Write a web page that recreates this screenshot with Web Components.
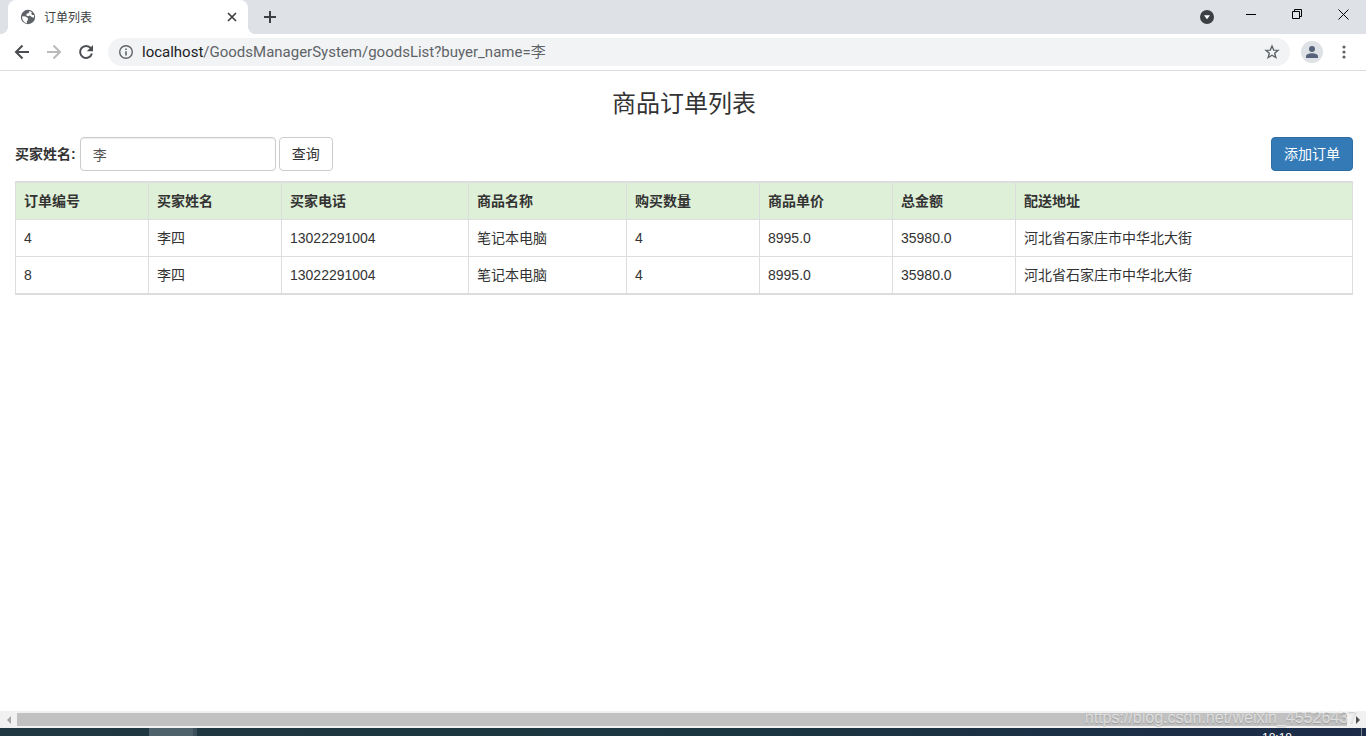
<!DOCTYPE html>
<html lang="zh-CN">
<head>
<meta charset="utf-8">
<title>订单列表</title>
<style>
html, body { height: 100%; }
body { margin: 0; color: #333; font: 14px/20px "Liberation Sans", "Noto Sans CJK SC", sans-serif; }
</style>
</head>
<body>
<browser-window>
  <tab-strip slot="chrome">订单列表</tab-strip>
  <address-bar slot="chrome" host="localhost" path="/GoodsManagerSystem/goodsList?buyer_name=李"></address-bar>
  <order-page>
    <span slot="title">商品订单列表</span>
    <order-search slot="search" value="李"></order-search>
    <order-table slot="table"></order-table>
  </order-page>
  <scroll-strip slot="footer">https://blog.csdn.net/weixin_45526437</scroll-strip>
  <task-bar slot="footer">18:18</task-bar>
</browser-window>

<script>
class BaseElement extends HTMLElement {
  connectedCallback() {
    if (this.shadowRoot) return;
    this.attachShadow({ mode: "open" }).innerHTML =
      `<style>:host, *, *::before { box-sizing: border-box; } button { font: inherit; color: inherit; cursor: pointer; } svg { display: block; }</style>` + this.render();
  }
}

customElements.define("browser-window", class extends BaseElement {
  render() {
    return `<style>
      :host { display: flex; flex-direction: column; height: 100vh; background: #fff; overflow: hidden; }
      main { flex: 1; min-height: 0; overflow: auto; }
    </style>
    <slot name="chrome"></slot><main><slot></slot></main><slot name="footer"></slot>`;
  }
});

customElements.define("tab-strip", class extends BaseElement {
  render() {
    return `<style>
      :host { display: flex; height: 34px; padding-left: 8px; background: #dee1e6; color: #3c4043; font: 12px/16px "Noto Sans CJK SC", sans-serif; }
      button { border: 0; padding: 0; background: none; display: grid; place-items: center; }
      .tab { position: relative; display: flex; align-items: center; gap: 8px; width: 240px; padding: 0 8px 0 12px; background: #fff; border-radius: 8px 8px 0 0; }
      .tab::before, .tab::after { content: ""; position: absolute; bottom: 0; width: 8px; height: 8px; }
      .tab::before { right: 100%; background: radial-gradient(circle at 0 0, transparent 8px, #fff 8px); }
      .tab::after { left: 100%; background: radial-gradient(circle at 100% 0, transparent 8px, #fff 8px); }
      .name { flex: 1; }
      .close { width: 16px; height: 16px; }
      .new { width: 28px; margin-left: 8px; }
      .menu { width: 42px; margin-left: auto; }
      .win { width: 46px; height: 28px; color: #000; }
    </style>
    <div class="tab">
      <svg width="16" height="16" viewBox="0 0 16 16"><circle cx="8" cy="8" r="7.2" fill="#5f6368"/><path d="M2.2 7.2 5.5 7.6 7.8 9 8 11 6.8 12.2 7 14.2A6.2 6.2 0 0 1 2.2 7.2ZM9.2 2.2 8.8 4 6.7 4.8 6.3 6.4 8 7.3 10 6.6 11.6 8.1 14 8.8A6.3 6.3 0 0 0 13.8 6L12 5.9 11.3 4.4 11.8 3.2A6 6 0 0 0 9.2 2.2Z" fill="#fff"/></svg>
      <span class="name"><slot></slot></span>
      <button class="close" aria-label="关闭标签页"><svg width="10" height="10" viewBox="0 0 10 10" stroke="#3c4043" stroke-width="1.7"><path d="M1 1 9 9M9 1 1 9"/></svg></button>
    </div>
    <button class="new" aria-label="新标签页"><svg width="12" height="12" viewBox="0 0 12 12" stroke="#3c4043" stroke-width="2"><path d="M6 0V12M0 6H12"/></svg></button>
    <button class="menu" aria-label="搜索标签页"><svg width="14" height="14" viewBox="0 0 14 14"><circle cx="7" cy="7" r="7" fill="#3c4043"/><path d="M4 5.2H10L7 9.2Z" fill="#fff"/></svg></button>
    <button class="win" aria-label="最小化"><svg width="10" height="10" stroke="#000"><path d="M0 5.5H10"/></svg></button>
    <button class="win" aria-label="还原"><svg width="10" height="10" fill="none" stroke="#000"><path d="M.5 2.5H7.5V9.5H.5ZM2.5 2.5V.5H9.5V7.5H7.5"/></svg></button>
    <button class="win" aria-label="关闭"><svg width="11" height="11" stroke="#000"><path d="M.5 .5 10.5 10.5M10.5 .5 .5 10.5"/></svg></button>`;
  }
});

customElements.define("address-bar", class extends BaseElement {
  render() {
    return `<style>
      :host { display: flex; align-items: center; gap: 4px; height: 37px; padding: 0 8px; border-bottom: 1px solid #dadce0; background: #fff; color: #5f6368; font: 15px/20px Roboto, "Noto Sans CJK SC", sans-serif; }
      button { border: 0; padding: 0; background: none; display: grid; place-items: center; width: 28px; height: 28px; }
      .box { flex: 1; display: flex; align-items: center; gap: 8px; height: 28px; padding: 0 4px 0 10px; margin-left: 4px; border-radius: 14px; background: #f1f3f4; }
      .url { flex: 1; white-space: nowrap; outline: 0; }
      .host { color: #202124; }
      .user { margin-left: 4px; }
    </style>
    <button aria-label="后退"><svg width="16" height="16" viewBox="0 0 16 16" fill="none" stroke="#4a4d51" stroke-width="2"><path d="M15 8H2.5M8.5 1.5 2 8l6.500 6.500"/></svg></button>
    <button aria-label="前进" disabled><svg width="16" height="16" viewBox="0 0 16 16" fill="none" stroke="#bababc" stroke-width="2"><path d="M1 8H13.500M7.500 1.500 14 8 7.500 14.500"/></svg></button>
    <button aria-label="重新加载"><svg width="16" height="16" viewBox="0 0 16 16"><path d="M12.800 4.200A6 6 0 1 0 13.900 9.500" fill="none" stroke="#4a4d51" stroke-width="2"/><path d="M15 1V7.200H8.800Z" fill="#4a4d51"/></svg></button>
    <div class="box">
      <svg width="16" height="16" viewBox="0 0 16 16"><circle cx="8" cy="8" r="6.300" fill="none" stroke="#5f6368" stroke-width="1.400"/><path d="M7.200 4.500H8.800V6H7.200ZM7.200 7.200H8.800V11.500H7.200Z" fill="#5f6368"/></svg>
      <div class="url" role="textbox" contenteditable="true" spellcheck="false" aria-label="地址"><span class="host">${this.getAttribute("host")}</span>${this.getAttribute("path")}</div>
      <button aria-label="收藏"><svg width="16" height="16" viewBox="0 0 16 16" fill="none" stroke="#5f6368" stroke-width="1.400"><path d="M8 2 9.700 6.100 14 6.400 10.700 9.200 11.800 13.500 8 11.200 4.200 13.500 5.300 9.200 2 6.400 6.300 6.100Z"/></svg></button>
    </div>
    <button class="user" aria-label="用户"><svg width="22" height="22" viewBox="0 0 22 22"><circle cx="11" cy="11" r="11" fill="#dee1e6"/><circle cx="11" cy="8" r="3" fill="#56617a"/><path d="M5 17V15.200C5 13 9 12.200 11 12.200S17 13 17 15.200V17Z" fill="#56617a"/></svg></button>
    <button aria-label="菜单"><svg width="4" height="14" viewBox="0 0 4 14" fill="#5f6368"><circle cx="2" cy="2" r="1.600"/><circle cx="2" cy="7" r="1.600"/><circle cx="2" cy="12" r="1.600"/></svg></button>`;
  }
});

customElements.define("order-page", class extends BaseElement {
  render() {
    return `<style>
      :host { display: block; padding: 20px 13px 0 15px; }
      h3 { margin: 0 0 20px; text-align: center; font-size: 24px; line-height: 26px; font-weight: 400; }
    </style>
    <h3><slot name="title"></slot></h3><slot name="search"></slot><slot name="table"></slot>`;
  }
});

customElements.define("order-search", class extends BaseElement {
  render() {
    return `<style>
      :host { display: flex; justify-content: space-between; margin-bottom: 10px; }
      form { display: flex; align-items: center; }
      label { font-weight: 700; margin-right: 4px; }
      input { width: 196px; height: 34px; padding: 6px 12px; margin-right: 3px; border: 1px solid #ccc; border-radius: 4px; font: inherit; color: #555; background: #fff; box-shadow: inset 0 1px 1px rgba(0, 0, 0, .075); }
      button { height: 34px; padding: 0 12px; border: 1px solid #ccc; border-radius: 4px; background: #fff; }
      .add { color: #fff; background: #337ab7; border-color: #2e6da4; }
    </style>
    <form><label for="buyer">买家姓名:</label><input id="buyer" type="text" name="buyer_name" value="${this.getAttribute("value")}"><button type="button">查询</button></form>
    <button class="add" type="button">添加订单</button>`;
  }
});

customElements.define("order-table", class extends BaseElement {
  render() {
    const heads = ["订单编号", "买家姓名", "买家电话", "商品名称", "购买数量", "商品单价", "总金额", "配送地址"];
    const rows = [
      ["4", "李四", "13022291004", "笔记本电脑", "4", "8995.0", "35980.0", "河北省石家庄市中华北大街"],
      ["8", "李四", "13022291004", "笔记本电脑", "4", "8995.0", "35980.0", "河北省石家庄市中华北大街"]
    ];
    const widths = [133, 133, 187, 158, 133, 133, 123];
    return `<style>
      :host { display: block; border: solid #ddd; border-width: 1px 0; }
      table { width: 100%; table-layout: fixed; border-collapse: collapse; }
      th, td { height: 36px; padding: 8px; border: 1px solid #ddd; text-align: left; line-height: 20px; }
      thead { background: #dff0d8; }
    </style>
    <table>
      <colgroup>${widths.map(w => `<col style="width:${w}px">`).join("")}<col></colgroup>
      <thead><tr>${heads.map(h => `<th scope="col">${h}</th>`).join("")}</tr></thead>
      <tbody>${rows.map(r => `<tr>${r.map(c => `<td>${c}</td>`).join("")}</tr>`).join("")}</tbody>
    </table>`;
  }
});

customElements.define("scroll-strip", class extends BaseElement {
  render() {
    return `<style>
      :host { position: relative; display: flex; height: 17px; background: #f1f1f1; }
      button { width: 17px; border: 0; padding: 0; background: none; display: grid; place-items: center; }
      .thumb { flex: 1; margin: 2px 2px 2px 0; background: #c1c1c1; }
      .mark { position: absolute; right: 9px; bottom: 0; font-size: 16px; line-height: 20px; color: rgba(255, 255, 255, .6); text-shadow: 0 1px 1px rgba(0, 0, 0, .2); white-space: nowrap; }
    </style>
    <button aria-label="向左滚动"><svg width="4" height="8"><path d="M4 0V8L0 4Z" fill="#a3a3a3"/></svg></button>
    <div class="thumb"></div>
    <button aria-label="向右滚动"><svg width="4" height="8"><path d="M0 0V8L4 4Z" fill="#505050"/></svg></button>
    <span class="mark"><slot></slot></span>`;
  }
});

customElements.define("task-bar", class extends BaseElement {
  render() {
    return `<style>
      :host { display: flex; justify-content: space-between; height: 8px; overflow: hidden; color: #fff; background: linear-gradient(90deg, #203841, #1b3640 50%, #1b2b48); font-size: 12px; line-height: 16px; }
      .app { width: 48px; margin-left: 149px; background: #4d626b; border-right: 4px solid #3c5059; }
      .end { display: flex; }
      .clock { padding: 2px 69px 0 0; }
      .desk { width: 5px; border-left: 1px solid #7c8594; }
    </style>
    <div class="app"></div>
    <div class="end"><span class="clock"><slot></slot></span><div class="desk"></div></div>`;
  }
});
</script>
</body>
</html>
